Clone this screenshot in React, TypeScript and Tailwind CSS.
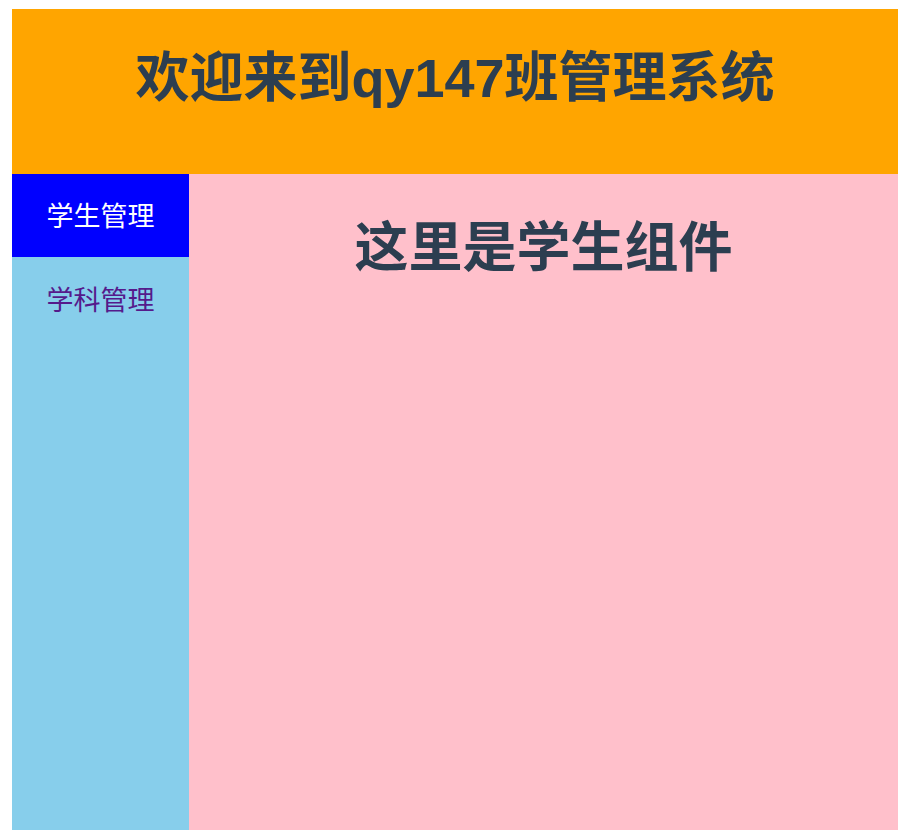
import React from "react";

const font = {
  fontFamily: '"Liberation Sans", Arial, "Noto Sans CJK SC", sans-serif',
};

const navItems = [
  { label: "学生管理", active: true },
  { label: "学科管理", active: false },
];

export default function App() {
  return (
    <div className="bg-white w-[905px] h-[839px] pt-[9px] pl-[12px]" style={font}>
      <div className="w-[886px] h-[821px] flex flex-col">
        <header className="h-[165px] bg-[#ffa500] flex justify-center pt-[39px]">
          <h1 className="text-[54px] leading-[60px] font-bold text-[#2c3e50]">
            欢迎来到qy147班管理系统
          </h1>
        </header>
        <div className="flex flex-1">
          <nav className="w-[177px] bg-[#87ceeb] flex flex-col">
            {navItems.map((item) => (
              <a
                key={item.label}
                className={
                  item.active
                    ? "h-[83px] flex items-center justify-center pt-[4px] bg-[#0000ff] text-white text-[27px]"
                    : "h-[83px] flex items-center justify-center pt-[5px] text-[#551a8b] text-[27px]"
                }
              >
                {item.label}
              </a>
            ))}
          </nav>
          <main className="flex-1 bg-[#ffc0cb] flex justify-center pt-[44px]">
            <h2 className="text-[54px] leading-[60px] font-bold text-[#2c3e50]">
              这里是学生组件
            </h2>
          </main>
        </div>
      </div>
    </div>
  );
}
